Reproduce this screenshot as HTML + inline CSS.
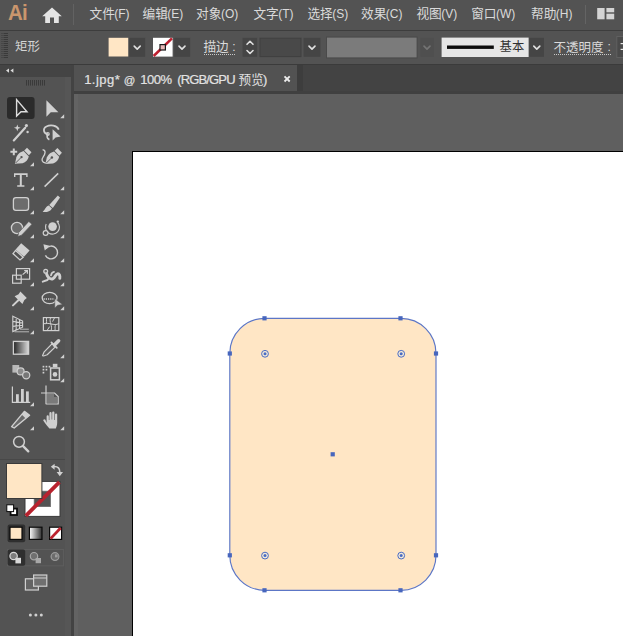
<!DOCTYPE html>
<html lang="zh">
<head>
<meta charset="utf-8">
<title>Adobe Illustrator</title>
<style>
html,body{margin:0;padding:0;}
body{width:623px;height:636px;overflow:hidden;position:relative;background:#5f5f5f;font-family:"Liberation Sans",sans-serif;font-size:12px;color:#d4d4d4;}
.abs,.t{position:absolute;}
.cj{font-family:"Liberation Sans","Noto Sans CJK SC",sans-serif;}
.t{white-space:nowrap;line-height:14px;}
#menubar{left:0;top:0;width:623px;height:30px;background:#535353;}
#ctrlbar{left:0;top:31px;width:623px;height:33px;background:#535353;}
#sep1{left:0;top:30px;width:623px;height:1px;background:#3d3d3d;}
#sep2{left:0;top:64px;width:623px;height:1px;background:#3b3b3b;}
#tabbar{left:74px;top:65px;width:549px;height:26px;background:#434343;}
#tab{left:74px;top:65px;width:223px;height:26px;background:#525252;}
#tabline{left:74px;top:91px;width:549px;height:3px;background:#404040;}
#tabsep{left:297px;top:65px;width:6px;height:26px;background:#3d3d3d;}
#toolhead{left:0;top:65px;width:71px;height:12px;background:#444444;}
#toolbar{left:0;top:77px;width:71px;height:559px;background:#535353;}
#tooledge{left:65px;top:77px;width:6px;height:559px;background:#565656;}
#toolsep{left:71px;top:65px;width:3px;height:571px;background:#434343;}
#canvas{left:74px;top:94px;width:549px;height:542px;background:#5f5f5f;}
#cstrip{left:74px;top:94px;width:4px;height:542px;background:#636363;}
#artboard{left:132px;top:151px;width:500px;height:500px;background:#fff;border:1px solid #000;}
.tb{top:71.6px;font-size:13px;line-height:16px;color:#e2e2e2;-webkit-text-stroke:0.2px #e2e2e2;}
</style>
</head>
<body>
<div id="menubar" class="abs"></div>
<div id="sep1" class="abs"></div>
<div id="ctrlbar" class="abs"></div>
<div id="sep2" class="abs"></div>
<div id="tabbar" class="abs"></div>
<div id="tab" class="abs"></div>
<div id="tabline" class="abs"></div>
<div id="tabsep" class="abs"></div>
<div id="canvas" class="abs"></div>
<div id="cstrip" class="abs"></div>
<div id="artboard" class="abs"></div>
<div id="toolhead" class="abs"></div>
<div id="toolbar" class="abs"></div>
<div id="tooledge" class="abs"></div>
<div id="toolsep" class="abs"></div>

<!-- menu bar -->
<div class="t" style="left:8.2px;top:0.1px;font-size:22px;line-height:26px;font-weight:bold;color:#ca966d;letter-spacing:-0.8px;transform:scaleX(0.93);transform-origin:0 0;">Ai</div>
<svg class="abs" style="left:40px;top:4px" width="26" height="22" viewBox="40 4 26 22">
  <path d="M52 7.5 L61.8 16.2 L58.8 16.2 L58.8 23 L54 23 L54 17.6 L50 17.6 L50 23 L45.2 23 L45.2 16.2 L42.2 16.2 Z" fill="#e4e4e4"/>
</svg>
<div class="abs" style="left:73px;top:4px;width:1px;height:21px;background:#626262"></div>
<div class="abs" style="left:585px;top:5px;width:1px;height:19px;background:#646464"></div>
<svg class="abs" style="left:596px;top:7px" width="20" height="14" viewBox="596 7 20 14">
  <rect x="597.2" y="8" width="7.4" height="11.3" fill="#d4d4d4"/>
  <rect x="606.4" y="8" width="7.8" height="4.3" fill="#d4d4d4"/>
  <rect x="606.4" y="13.7" width="7.8" height="5.6" fill="#d4d4d4"/>
</svg>
<span class="t cj" style="left:89.5px;top:7.1px;font-size:12.7px;color:#dadada">文件</span>
<span class="t" style="left:114.3px;top:7.2px;color:#dadada;font-size:12px">(F)</span>
<span class="t cj" style="left:142.5px;top:7.1px;font-size:12.7px;color:#dadada">编辑</span>
<span class="t" style="left:167.3px;top:7.2px;color:#dadada;font-size:12px">(E)</span>
<span class="t cj" style="left:196.1px;top:7.1px;font-size:12.7px;color:#dadada">对象</span>
<span class="t" style="left:220.9px;top:7.2px;color:#dadada;font-size:12px">(O)</span>
<span class="t cj" style="left:253.4px;top:7.1px;font-size:12.7px;color:#dadada">文字</span>
<span class="t" style="left:278.2px;top:7.2px;color:#dadada;font-size:12px">(T)</span>
<span class="t cj" style="left:307.4px;top:7.1px;font-size:12.7px;color:#dadada">选择</span>
<span class="t" style="left:332.2px;top:7.2px;color:#dadada;font-size:12px">(S)</span>
<span class="t cj" style="left:361.0px;top:7.1px;font-size:12.7px;color:#dadada">效果</span>
<span class="t" style="left:385.8px;top:7.2px;color:#dadada;font-size:12px">(C)</span>
<span class="t cj" style="left:416.4px;top:7.1px;font-size:12.7px;color:#dadada">视图</span>
<span class="t" style="left:441.2px;top:7.2px;color:#dadada;font-size:12px">(V)</span>
<span class="t cj" style="left:471.2px;top:7.1px;font-size:12.7px;color:#dadada">窗口</span>
<span class="t" style="left:496px;top:7.2px;color:#dadada;font-size:12px">(W)</span>
<span class="t cj" style="left:531.0px;top:7.1px;font-size:12.7px;color:#dadada">帮助</span>
<span class="t" style="left:555.8px;top:7.2px;color:#dadada;font-size:12px">(H)</span>

<!-- control bar -->
<svg class="abs" style="left:0;top:30px" width="623" height="34" viewBox="0 30 623 34">
  <rect x="1" y="33" width="3" height="1" fill="#474747"/><rect x="4" y="33" width="4" height="1" fill="#3a3a3a"/><rect x="1" y="35" width="3" height="1" fill="#474747"/><rect x="4" y="35" width="4" height="1" fill="#3a3a3a"/><rect x="1" y="37" width="3" height="1" fill="#474747"/><rect x="4" y="37" width="4" height="1" fill="#3a3a3a"/><rect x="1" y="39" width="3" height="1" fill="#474747"/><rect x="4" y="39" width="4" height="1" fill="#3a3a3a"/><rect x="1" y="41" width="3" height="1" fill="#474747"/><rect x="4" y="41" width="4" height="1" fill="#3a3a3a"/><rect x="1" y="43" width="3" height="1" fill="#474747"/><rect x="4" y="43" width="4" height="1" fill="#3a3a3a"/><rect x="1" y="45" width="3" height="1" fill="#474747"/><rect x="4" y="45" width="4" height="1" fill="#3a3a3a"/><rect x="1" y="47" width="3" height="1" fill="#474747"/><rect x="4" y="47" width="4" height="1" fill="#3a3a3a"/><rect x="1" y="49" width="3" height="1" fill="#474747"/><rect x="4" y="49" width="4" height="1" fill="#3a3a3a"/><rect x="1" y="51" width="3" height="1" fill="#474747"/><rect x="4" y="51" width="4" height="1" fill="#3a3a3a"/><rect x="1" y="53" width="3" height="1" fill="#474747"/><rect x="4" y="53" width="4" height="1" fill="#3a3a3a"/><rect x="1" y="55" width="3" height="1" fill="#474747"/><rect x="4" y="55" width="4" height="1" fill="#3a3a3a"/><rect x="1" y="57" width="3" height="1" fill="#474747"/><rect x="4" y="57" width="4" height="1" fill="#3a3a3a"/>
  <!-- fill swatch + dropdown -->
  <rect x="108.6" y="37.8" width="19.6" height="18.7" fill="#ffe6c5"/>
  <rect x="129.2" y="37.8" width="16" height="19" fill="#454545"/><path d="M134.2 46.1 L137.2 49.1 L140.2 46.1" fill="none" stroke="#e0e0e0" stroke-width="1.6" stroke-linecap="round" stroke-linejoin="round"/>
  <!-- stroke swatch + dropdown -->
  <rect x="153" y="37.8" width="19.6" height="18.8" fill="#ffffff"/>
  <path d="M153.6 56 L172 38.4" stroke="#bd2030" stroke-width="2.6"/>
  <rect x="160" y="44.6" width="5.4" height="5.4" fill="#e8b8b8" stroke="#1a1a1a" stroke-width="1.2"/>
  <rect x="174.2" y="37.8" width="16" height="19" fill="#454545"/><path d="M179.0 46.1 L182 49.1 L185.0 46.1" fill="none" stroke="#e0e0e0" stroke-width="1.6" stroke-linecap="round" stroke-linejoin="round"/>
  <!-- stroke weight: spinner, input, dropdown -->
  <path d="M204 54.5 H236" stroke="#c8c8c8" stroke-width="1" stroke-dasharray="1 1"/>
  <rect x="242.6" y="37.8" width="14.6" height="19" fill="#454545"/><path d="M247 44.3 L250 41.3 L253 44.3" fill="none" stroke="#e0e0e0" stroke-width="1.6" stroke-linecap="round" stroke-linejoin="round"/><path d="M247 50.5 L250 53.5 L253 50.5" fill="none" stroke="#e0e0e0" stroke-width="1.6" stroke-linecap="round" stroke-linejoin="round"/>
  <rect x="260" y="38.2" width="41" height="18.4" fill="#494949" stroke="#404040" stroke-width="1"/>
  <rect x="303.6" y="37.8" width="16.8" height="19" fill="#454545"/><path d="M309.0 46.1 L312 49.1 L315.0 46.1" fill="none" stroke="#e0e0e0" stroke-width="1.6" stroke-linecap="round" stroke-linejoin="round"/>
  <!-- variable width profile -->
  <rect x="326" y="36.6" width="91.6" height="21.8" fill="#4a4a4a"/>
  <rect x="327" y="37.6" width="89.6" height="19.8" fill="#7b7b7b"/>
  <rect x="420.6" y="37.8" width="13.4" height="19" fill="#4f4f4f"/><path d="M424.0 46.1 L427 49.1 L430.0 46.1" fill="none" stroke="#747474" stroke-width="1.6" stroke-linecap="round" stroke-linejoin="round"/>
  <!-- brush definition -->
  <rect x="441.6" y="37.6" width="87" height="19.4" fill="#e6e6e6"/>
  <rect x="447" y="45.5" width="46.8" height="3.4" fill="#0c0c0c"/>
  <rect x="529.2" y="37.8" width="14.8" height="19" fill="#454545"/><path d="M533.8 46.1 L536.8 49.1 L539.8 46.1" fill="none" stroke="#e0e0e0" stroke-width="1.6" stroke-linecap="round" stroke-linejoin="round"/>
  <!-- opacity -->
  <path d="M554 54.5 H611.5" stroke="#c8c8c8" stroke-width="1" stroke-dasharray="1 1"/>
  <rect x="616.8" y="36.5" width="8" height="21" fill="#4a4a4a" stroke="#606060" stroke-width="1"/>
  <rect x="620.6" y="43" width="3" height="1.2" fill="#e8e8e8"/><rect x="620.6" y="48.8" width="3" height="1.2" fill="#e8e8e8"/>
</svg>
<span class="t cj" style="left:15.0px;top:39.7px;font-size:12.4px;color:#d4d4d4">矩形</span><span class="t cj" style="left:203.4px;top:40.3px;font-size:12.7px;color:#dadada">描边</span><span class="t" style="left:232.2px;top:39.8px;color:#dadada">:</span><span class="t cj" style="left:499.6px;top:40.4px;font-size:12.3px;color:#303030">基本</span><span class="t cj" style="left:553.4px;top:40.9px;font-size:12.5px;color:#dadada">不透明度</span><span class="t" style="left:607.4px;top:39.8px;color:#dadada">:</span>

<!-- document tab -->
<span class="t tb" style="left:84.2px;letter-spacing:0.45px">1.jpg*</span>
<span class="t tb" style="left:123.7px;font-size:11.4px;top:71.5px">@</span>
<span class="t tb" style="left:140.2px;letter-spacing:-0.45px">100%</span>
<span class="t tb" style="left:177.2px;letter-spacing:-0.85px">(RGB/GPU</span>
<span class="t cj" style="left:238.6px;top:72.7px;font-size:12.6px;color:#e0e0e0">预览</span>
<span class="t tb" style="left:263px">)</span>
<svg class="abs" style="left:282.1px;top:74px" width="10" height="10" viewBox="0 0 10 10"><path d="M2.5 2.3 L7.7 7.5 M7.7 2.3 L2.5 7.5" stroke="#ececec" stroke-width="1.8"/></svg>
<svg class="abs" style="left:4px;top:66px" width="12" height="10" viewBox="4 66 12 10"><path d="M9 68.4 L6 70.6 L9 72.8 Z M13.4 68.4 L10.4 70.6 L13.4 72.8 Z" fill="#dadada"/></svg>

<!-- tools panel -->
<svg class="abs" style="left:0;top:64px" width="72" height="572" viewBox="0 64 72 572"><defs><linearGradient id="gr1" x1="0" x2="1" y1="0" y2="0"><stop offset="0" stop-color="#242424"/><stop offset="1" stop-color="#dadada"/></linearGradient><linearGradient id="gr2" x1="0" x2="1" y1="0" y2="0"><stop offset="0" stop-color="#ffffff"/><stop offset="1" stop-color="#2e2e2e"/></linearGradient></defs><rect x="26" y="80" width="1" height="5.6" fill="#3a3a3a"/><rect x="28" y="80" width="1" height="5.6" fill="#3a3a3a"/><rect x="30" y="80" width="1" height="5.6" fill="#3a3a3a"/><rect x="32" y="80" width="1" height="5.6" fill="#3a3a3a"/><rect x="34" y="80" width="1" height="5.6" fill="#3a3a3a"/><rect x="36" y="80" width="1" height="5.6" fill="#3a3a3a"/><rect x="38" y="80" width="1" height="5.6" fill="#3a3a3a"/><rect x="40" y="80" width="1" height="5.6" fill="#3a3a3a"/><rect x="42" y="80" width="1" height="5.6" fill="#3a3a3a"/><rect x="44" y="80" width="1" height="5.6" fill="#3a3a3a"/>
<rect x="7" y="97" width="27.6" height="22" rx="3" fill="#2b2b2b"/>
<path d="M16.6 99.6 L16.6 116 L21 111.7 L27 111.7 Z" fill="none" stroke="#dedede" stroke-width="1.4" stroke-linejoin="miter"/>
<path d="M46.4 100.3 L46.4 116.7 L50.8 112.3 L58.4 112.3 Z" fill="#d0d0d0"/><path d="M64.2 114.2 V118.2 H60.2 Z" fill="#d0d0d0"/>
<path d="M13.8 140.4 L25.2 127.8" stroke="#d0d0d0" stroke-width="2.2" stroke-linecap="round"/>
<path d="M17.3 124.4 L18.2 126.9 L20.7 127.8 L18.2 128.7 L17.3 131.2 L16.4 128.7 L13.9 127.8 L16.4 126.9 Z" fill="#d0d0d0"/>
<circle cx="26.4" cy="125.6" r="1.6" fill="#d0d0d0"/><circle cx="27.6" cy="132" r="1.2" fill="#d0d0d0"/>
<path d="M49.4 139.6 C46.6 138.4 46.4 135.2 48.6 134 C43.6 134.4 42.2 128.8 46.4 126.6 C50.4 124.5 56.8 125.2 58.8 129.6" fill="none" stroke="#d0d0d0" stroke-width="1.7"/>
<circle cx="47.8" cy="134" r="1.5" fill="none" stroke="#d0d0d0" stroke-width="1.1"/>
<path d="M52.6 129.2 L52.6 140.6 L55.6 137.6 L60.6 136.4 Z" fill="#d0d0d0"/>
<path d="M13.8 148.4 V155.2 M10.4 151.8 H17.2" stroke="#d0d0d0" stroke-width="2"/><path d="M14.9 163.7 L16.4 157.2 C17.2 154.4 20.4 151.8 23.6 151 L28.8 156.4 C28.2 159.6 25.6 162.4 22.6 163.2 Z" fill="#d0d0d0"/><path d="M24.2 150.4 L27 147.7 L31.5 152.3 L28.9 155.3 Z" fill="#d0d0d0"/><path d="M15.6 163 L20.8 157.8" stroke="#535353" stroke-width="0.9"/><circle cx="21.5" cy="157.1" r="1.2" fill="#535353"/><path d="M34 162.2 V166.2 H30 Z" fill="#d0d0d0"/><g transform="translate(30.4 0.4)"><path d="M14.9 163.7 L16.4 157.2 C17.2 154.4 20.4 151.8 23.6 151 L28.8 156.4 C28.2 159.6 25.6 162.4 22.6 163.2 Z" fill="#d0d0d0"/><path d="M24.2 150.4 L27 147.7 L31.5 152.3 L28.9 155.3 Z" fill="#d0d0d0"/><path d="M15.6 163 L20.8 157.8" stroke="#535353" stroke-width="0.9"/><circle cx="21.5" cy="157.1" r="1.2" fill="#535353"/></g><path d="M42.6 149.6 C46.4 150.2 45.2 154 43.2 156.8 C41.2 159.6 41.8 162.6 45.6 163" fill="none" stroke="#d0d0d0" stroke-width="1.3"/>
<path d="M14 173.2 H27.6 V177 H26.2 V174.9 H21.8 V185.3 H24.4 V186.7 H17.2 V185.3 H19.8 V174.9 H15.4 V177 H14 Z" fill="#d0d0d0"/>
<path d="M44.6 186.6 L58.2 173.4" stroke="#d0d0d0" stroke-width="1.5"/><path d="M34 186.2 V190.2 H30 Z" fill="#d0d0d0"/><path d="M64.2 186.2 V190.2 H60.2 Z" fill="#d0d0d0"/>
<rect x="13.4" y="197.6" width="15.2" height="12.8" rx="2.6" fill="#6c6c6c" stroke="#d0d0d0" stroke-width="1.3"/>
<path d="M57.8 195.6 L60 197.4 L52.8 208 L49.2 205 Z" fill="#d0d0d0"/>
<path d="M48.8 205.6 L52 208.4 C50 212 45.6 212.4 42.6 211.8 C45.2 210.4 45 207 48.8 205.6 Z" fill="#d0d0d0"/><path d="M34 210.2 V214.2 H30 Z" fill="#d0d0d0"/><path d="M64.2 210.2 V214.2 H60.2 Z" fill="#d0d0d0"/>
<circle cx="17" cy="228" r="5.6" fill="#6c6c6c" stroke="#d0d0d0" stroke-width="1.3"/>
<path d="M28.8 221.4 L32 224.2 L21.6 235.2 L17.8 236.6 L18.6 232.6 Z" fill="#d0d0d0" stroke="#535353" stroke-width="0.7"/>
<circle cx="52.6" cy="226.6" r="4.3" fill="#d0d0d0"/>
<path d="M57.6 222.4 A7 7 0 1 1 46.2 224" fill="none" stroke="#d0d0d0" stroke-width="1.1"/>
<circle cx="45.6" cy="233" r="2.4" fill="#535353" stroke="#d0d0d0" stroke-width="1.2"/>
<circle cx="57.8" cy="221.6" r="1.2" fill="#d0d0d0"/><path d="M34 234.2 V238.2 H30 Z" fill="#d0d0d0"/><path d="M64.2 234.2 V238.2 H60.2 Z" fill="#d0d0d0"/>
<path d="M21.2 243.2 L29.6 250.6 L24 256.8 L15.6 249.4 Z" fill="#d0d0d0"/>
<path d="M15.6 250.4 L23.2 257.2 L20 260 L13 253.6 Z" fill="none" stroke="#d0d0d0" stroke-width="1.3"/>
<path d="M46 248.6 A6.4 6.4 0 1 1 45.4 255.4" fill="none" stroke="#d0d0d0" stroke-width="1.4"/>
<path d="M43.4 244.2 L49.6 245.8 L44.8 250.4 Z" fill="#d0d0d0"/><path d="M34 258.2 V262.2 H30 Z" fill="#d0d0d0"/><path d="M64.2 258.2 V262.2 H60.2 Z" fill="#d0d0d0"/>
<rect x="16.4" y="268.6" width="13.2" height="10.6" fill="none" stroke="#d0d0d0" stroke-width="1.2"/>
<rect x="12.6" y="275.2" width="8.6" height="8" fill="none" stroke="#d0d0d0" stroke-width="1.2"/>
<path d="M22.6 274.6 L27.2 270.8 M24.2 270.6 H27.4 V273.8" fill="none" stroke="#d0d0d0" stroke-width="1.2"/>
<circle cx="45.7" cy="271.3" r="1.9" fill="#6a6a6a" stroke="#d0d0d0" stroke-width="1.3"/>
<path d="M46.6 274 C47.6 277.6 50.6 279.8 53 278.6 C55.4 277.4 55.2 274.4 57.4 273.8 C59.4 273.4 60.2 275.6 59.8 278.2" fill="none" stroke="#d0d0d0" stroke-width="2.9" stroke-linecap="round"/>
<path d="M51 275.4 C51.4 273.4 52.4 272 54 271.8" fill="none" stroke="#d0d0d0" stroke-width="1.8" stroke-linecap="round"/>
<path d="M42.8 281.6 L47.4 280 L49 277.8" fill="none" stroke="#d0d0d0" stroke-width="2" stroke-linecap="round" stroke-linejoin="round"/><path d="M34 282.2 V286.2 H30 Z" fill="#d0d0d0"/><path d="M64.2 282.2 V286.2 H60.2 Z" fill="#d0d0d0"/>
<path d="M20.4 291.6 L26.8 298 L24.4 300 L22.4 304 L14.6 296.2 L18.6 294.2 Z" fill="#d0d0d0"/>
<path d="M18.6 300 L13 305.4" stroke="#d0d0d0" stroke-width="2" stroke-linecap="round"/>
<ellipse cx="49.6" cy="298" rx="7.4" ry="5.6" fill="none" stroke="#d0d0d0" stroke-width="1.3"/>
<path d="M43.6 299 H53.4" stroke="#d0d0d0" stroke-width="1.6" stroke-dasharray="1.2 1"/>
<path d="M54.8 298.6 L54.8 308 L57.6 305.2 L62.4 304.6 Z" fill="#d0d0d0" stroke="#535353" stroke-width="0.5"/><path d="M34 306.2 V310.2 H30 Z" fill="#d0d0d0"/><path d="M64.2 306.2 V310.2 H60.2 Z" fill="#d0d0d0"/>
<path d="M12.8 316.2 L22.6 321 V327.2 L12.8 331.6 Z M16.2 317.8 V330 M19.6 319.4 V328.6 M12.8 321.4 L22.6 323 M12.8 326.4 L22.6 325.2" fill="none" stroke="#d0d0d0" stroke-width="1.1"/>
<path d="M20 329.2 H28.8 M14.6 331.8 H29" stroke="#d0d0d0" stroke-width="1" opacity="0.8"/>
<rect x="43.4" y="317.6" width="15.4" height="13" fill="none" stroke="#d0d0d0" stroke-width="1.2"/>
<path d="M50.6 317.6 C48.6 322 53 326 51 330.6 M43.4 324 C48 321.6 54 326.4 58.8 323.6 M46.6 317.6 C46 321 47.4 322.6 45.6 324.2 M55 330.6 C55.6 327.6 54 326 56.4 324.4 M47 330.6 L49.6 326.6 M54.6 317.6 L52.6 321.6" fill="none" stroke="#d0d0d0" stroke-width="1"/><path d="M34 330.2 V334.2 H30 Z" fill="#d0d0d0"/>
<rect x="13.4" y="341.4" width="15.2" height="12.8" fill="url(#gr1)" stroke="#d0d0d0" stroke-width="1.3"/>
<path d="M42.6 355.6 L44.2 351.8 L52.4 343.4 L55.6 346.6 L47.2 354.8 L43.6 356 Z" fill="#5c5c5c" stroke="#d0d0d0" stroke-width="1.2" stroke-linejoin="round"/>
<path d="M54.4 345 L58.6 340.8" stroke="#d0d0d0" stroke-width="3.6" stroke-linecap="round"/><path d="M51.4 342.4 L56.8 347.8" stroke="#d0d0d0" stroke-width="1.7" stroke-linecap="round"/><path d="M64.2 354.2 V358.2 H60.2 Z" fill="#d0d0d0"/>
<rect x="12.4" y="365" width="6.8" height="7.6" fill="#b8b8b8"/>
<circle cx="20.6" cy="371.4" r="3.5" fill="#8c8c8c" stroke="#d0d0d0" stroke-width="1.2"/>
<circle cx="26.2" cy="375.2" r="3.6" fill="#777" stroke="#d0d0d0" stroke-width="1.2"/>
<rect x="50.6" y="368" width="8.8" height="11.8" fill="none" stroke="#d0d0d0" stroke-width="1.5"/>
<rect x="52.8" y="363.8" width="4.6" height="3.4" fill="#d0d0d0"/>
<circle cx="55" cy="374.4" r="2.3" fill="#d0d0d0"/>
<g fill="#d0d0d0" transform="translate(0.6 1.4)"><rect x="42" y="364.4" width="1.7" height="1.7"/><rect x="45" y="364.4" width="1.7" height="1.7"/><rect x="48" y="364.4" width="1.7" height="1.7"/>
<rect x="42" y="367.4" width="1.7" height="1.7"/><rect x="45" y="367.4" width="1.7" height="1.7"/><rect x="42" y="370.4" width="1.7" height="1.7"/></g><path d="M64.2 378.2 V382.2 H60.2 Z" fill="#d0d0d0"/>
<path d="M12.4 386.4 V402.4 H30.2" fill="none" stroke="#d0d0d0" stroke-width="1.2"/>
<rect x="16" y="394.2" width="2.8" height="8" fill="#d0d0d0"/><rect x="21" y="389" width="2.8" height="13.2" fill="#d0d0d0"/><rect x="26" y="391.4" width="2.8" height="10.8" fill="#d0d0d0"/>
<path d="M46 385.4 V404.2 M41 393 H54.6 L58.2 396.6 V404 H46" fill="none" stroke="#d0d0d0" stroke-width="1.2"/>
<path d="M47 394 H54 V397 H57.2 V403 H47 Z" fill="#7a7a7a"/><path d="M34 402.2 V406.2 H30 Z" fill="#d0d0d0"/>
<path d="M24.4 411.4 L29.6 415.2 L14.2 428 L11.6 426.6 Z" fill="#6a6a6a" stroke="#d0d0d0" stroke-width="1.4" stroke-linejoin="round"/>
<path d="M24.4 411.4 L29.6 415.2 L25.8 418.4 L21.6 414.6 Z" fill="#d0d0d0"/>
<path d="M46.6 423 L46.6 416.4 A1.1 1.1 0 0 1 48.8 416.4 L48.8 420 L49.4 420 L49.4 413.2 A1.1 1.1 0 0 1 51.6 413.2 L51.6 419.6 L52.2 419.6 L52.2 412.6 A1.1 1.1 0 0 1 54.4 412.6 L54.4 420 L55 420 L55 414.6 A1.1 1.1 0 0 1 57.2 414.6 L57.2 422.6 C57.2 425.6 56.4 427 55.8 428.6 L49.4 428.6 C48 426.6 45.4 424.2 43.4 420.8 C42.8 419.6 44.4 418.6 45.4 419.8 Z" fill="#d0d0d0"/><path d="M34 426.2 V430.2 H30 Z" fill="#d0d0d0"/><path d="M64.2 426.2 V430.2 H60.2 Z" fill="#d0d0d0"/>
<circle cx="19" cy="441.8" r="5.4" fill="none" stroke="#d0d0d0" stroke-width="1.5"/>
<path d="M23.1 446.1 L28.3 451.4" stroke="#d0d0d0" stroke-width="2.3" stroke-linecap="round"/><rect x="0" y="459" width="65" height="1" fill="#484848"/>
<rect x="25" y="481.4" width="35" height="35" fill="#ffffff" stroke="#3a3a3a" stroke-width="1"/>
<rect x="34.2" y="491.2" width="16.2" height="15.4" fill="#535353" stroke="#6a6a6a" stroke-width="0.8"/>
<path d="M25.8 515.8 L59.4 482.2" stroke="#b8222e" stroke-width="3.8"/>
<rect x="6.5" y="463.5" width="35.4" height="35" fill="#ffe6c5" stroke="#3a3a3a" stroke-width="1"/>
<path d="M53.6 466.6 C58 466.2 60 468.6 59.8 472.4" fill="none" stroke="#d0d0d0" stroke-width="1.6"/>
<path d="M50.8 466.8 L54.6 463.8 V469.8 Z M59.8 476.2 L56.6 472 H63 Z" fill="#d0d0d0"/>
<rect x="10.6" y="508.6" width="6.4" height="6.4" fill="#ffffff" stroke="#0a0a0a" stroke-width="1.8"/>
<rect x="6.8" y="504.8" width="6.8" height="6.8" fill="#ffffff" stroke="#0a0a0a" stroke-width="1"/>
<rect x="7.6" y="524.6" width="17.6" height="17.6" rx="2" fill="#2f2f2f"/>
<rect x="10" y="527.2" width="12" height="12.2" fill="#ffe6c5" stroke="#0a0a0a" stroke-width="1.2"/>
<rect x="29.4" y="527.2" width="12.6" height="12.2" fill="url(#gr2)" stroke="#0a0a0a" stroke-width="1.2"/>
<rect x="49.6" y="527.2" width="12" height="12.2" fill="#ffffff" stroke="#0a0a0a" stroke-width="1.2"/>
<path d="M50.6 538.6 L60.6 528" stroke="#bc222e" stroke-width="2.8"/>
<rect x="7.6" y="549.6" width="56" height="16.2" fill="none" stroke="#5e5e5e" stroke-width="1"/>
<rect x="7.6" y="549.6" width="17.6" height="16.2" rx="2" fill="#2f2f2f"/>
<circle cx="13.6" cy="556" r="3.7" fill="#7d7d7d" stroke="#d8d8d8" stroke-width="1.2"/><rect x="15.4" y="557.8" width="5.6" height="5.6" fill="#d8d8d8"/>
<circle cx="34" cy="556.2" r="3.7" fill="#707070" stroke="#a8a8a8" stroke-width="1.2"/><rect x="35.6" y="558" width="5.4" height="5.2" fill="#a8a8a8"/>
<circle cx="55" cy="556.6" r="3.9" fill="#6c6c6c" stroke="#9c9c9c" stroke-width="1.2"/><path d="M55 554.4 H57.6 V557.4 H55 Z" fill="#9c9c9c"/>
<rect x="25.4" y="578.8" width="13" height="11.2" fill="#646464" stroke="#d0d0d0" stroke-width="1.2"/>
<rect x="33.6" y="575" width="13.2" height="11.2" fill="#707070" stroke="#d0d0d0" stroke-width="1.2"/>
<path d="M33.6 578 H46.8" stroke="#d0d0d0" stroke-width="1"/>
<circle cx="30.4" cy="615" r="1.5" fill="#d0d0d0"/><circle cx="35.9" cy="615" r="1.5" fill="#d0d0d0"/><circle cx="41.3" cy="615" r="1.5" fill="#d0d0d0"/>
</svg>

<svg class="abs" style="left:0;top:0" width="623" height="636" viewBox="0 0 623 636">
  <rect x="229.8" y="318.3" width="206.2" height="272" rx="35" ry="35" fill="#ffe6c5" stroke="#5c76c6" stroke-width="1.15"/>
  <g fill="#4766bd">
    <rect x="262.4" y="316.2" width="4.2" height="4.2"/>
    <rect x="398.4" y="316.2" width="4.2" height="4.2"/>
    <rect x="262.4" y="588.2" width="4.2" height="4.2"/>
    <rect x="398.4" y="588.2" width="4.2" height="4.2"/>
    <rect x="227.7" y="351.4" width="4.2" height="4.2"/>
    <rect x="227.7" y="553.2" width="4.2" height="4.2"/>
    <rect x="433.9" y="351.4" width="4.2" height="4.2"/>
    <rect x="433.9" y="553.2" width="4.2" height="4.2"/>
    <rect x="330.6" y="452.2" width="4.2" height="4.2"/>
  </g>
  <g fill="#f4ead8" stroke="#4a6cc4" stroke-width="1">
    <circle cx="265" cy="353.8" r="3.4"/><circle cx="401.2" cy="353.8" r="3.4"/>
    <circle cx="265" cy="555.6" r="3.4"/><circle cx="401.2" cy="555.6" r="3.4"/>
  </g>
  <g fill="#4a6cc4">
    <circle cx="265" cy="353.8" r="1.5"/><circle cx="401.2" cy="353.8" r="1.5"/>
    <circle cx="265" cy="555.6" r="1.5"/><circle cx="401.2" cy="555.6" r="1.5"/>
  </g>
</svg>
</body>
</html>
